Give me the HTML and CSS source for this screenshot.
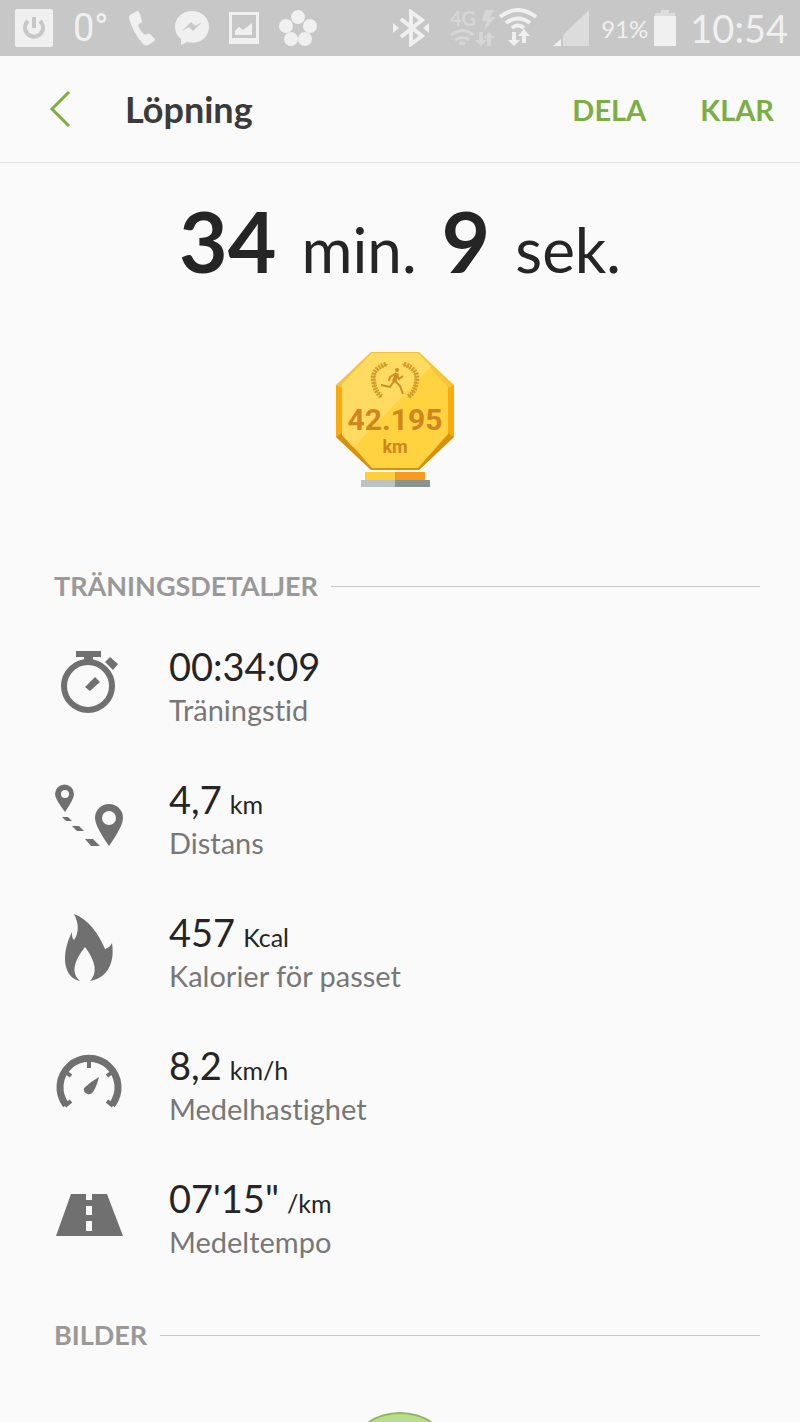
FILE: index.html
```
<!DOCTYPE html>
<html lang="sv">
<head>
    <meta charset="UTF-8">
    <meta name="viewport" content="width=device-width, initial-scale=1.0">
    <link rel="stylesheet" href="styles.css">
    <title>Löpning</title>
</head>
<body>
    <div class="statusbar">
        <div class="status-left">
            <svg width="38" height="38" viewBox="0 0 38 38">
                <rect width="38" height="38" rx="2" fill="#f0f0f0"/>
                <path d="M13 12a9 9 0 1 0 12 0M19 8v11" fill="none" stroke="#c7c7c7" stroke-width="4"/>
            </svg>
            <span class="temp">0°</span>
            <svg width="26" height="36" viewBox="0 0 26 36">
                <path d="M1 5 8 1q2 0 3 3l2 7q0 2-3 3l-1 1q2 6 7 10l2-1q2-1 4 1l4 4q0 2-2 3l-5 3q-3 1-5-1Q4 23 0 8q0-2 1-3z" fill="#f0f0f0"/>
            </svg>
            <svg width="34" height="36" viewBox="0 0 34 36">
                <path d="M17 1C7 1 0 8 0 17c0 5 2 9 6 12v6l6-3c13 3 22-5 22-15C34 8 27 1 17 1z" fill="#f0f0f0"/>
                <path d="M7 21l9-9 4 4 7-4-9 9-4-4z" fill="#c7c7c7"/>
            </svg>
            <svg width="30" height="34" viewBox="0 0 30 34">
                <path d="M0 1h30v32H0zM3 4v23h24V4z" fill="#f0f0f0" fill-rule="evenodd"/>
                <path d="M6 24v-4l4-4 4 3 9-7v12z" fill="#f0f0f0"/>
            </svg>
            <svg width="38" height="38" viewBox="0 0 38 38" fill="#f0f0f0">
                <circle cx="19" cy="8" r="7"/>
                <circle cx="7" cy="17" r="7"/>
                <circle cx="31" cy="17" r="7"/>
                <circle cx="12" cy="30" r="7"/>
                <circle cx="26" cy="30" r="7"/>
            </svg>
        </div>
        <div class="status-right">
            <svg class="bluetooth" width="36" height="38" viewBox="0 0 36 38">
                <path d="M8 10l21 17-11 8V3l11 8L8 28" fill="none" stroke="#f0f0f0" stroke-width="4"/>
                <path d="M0 14l6 5-6 5zM36 14l-6 5 6 5z" fill="#f0f0f0"/>
            </svg>
            <svg class="network" width="48" height="42" viewBox="0 -2 48 42">
                <text class="network-text" x="1" y="17">4G</text>
                <path d="M36 1h9l-4 7h6L35 21l3-9h-5zM30 23h4v8h4l-6 6-6-6h4zM42 37h-4v-8h-4l6-6 6 6h-4z" fill="#d6d6d6"/>
                <g fill="none" stroke="#d6d6d6" stroke-width="3">
                    <path d="M2 26q12-9 22 0M6 31q7-5 14 0M10 35q3-2 6 0"/>
                </g>
            </svg>
            <svg class="wifi" width="38" height="40" viewBox="0 0 38 40">
                <g fill="none" stroke="#f0f0f0" stroke-width="4">
                    <path d="M1 9q18-14 36 0M7 15q12-9 24 0M13 20q6-5 12 0"/>
                </g>
                <path d="M13 24h4v8h4l-6 6-6-6h4zM27 35h-4v-7h-4l6-7 6 7h-4z" fill="#f0f0f0"/>
            </svg>
            <svg class="signal" width="36" height="36" viewBox="0 0 36 36">
                <path d="M36 0v36H10V25z" fill="#dcdcdc"/>
                <path d="M0 36l8-7v7z" fill="#f0f0f0"/>
            </svg>
            <span class="percent">91%</span>
            <svg class="battery" width="22" height="36" viewBox="0 0 22 36">
                <path d="M7 0h8v3h6v4H1V3h6z" fill="#dcdcdc"/>
                <path d="M0 6h22v30H0z" fill="#f0f0f0"/>
            </svg>
            <span class="clock">10:54</span>
        </div>
    </div>

    <header class="topbar">
        <button class="back" aria-label="Tillbaka">
            <svg width="22" height="36" viewBox="0 0 22 36">
                <path d="M20 1L3 18l17 17" fill="none" stroke="#7cae44" stroke-width="3"/>
            </svg>
        </button>
        <h1 class="title">Löpning</h1>
        <button class="action">DELA</button>
        <button class="action">KLAR</button>
    </header>

    <main>
        <p class="duration"><b>34</b> <span>min.</span> <b>9</b> <span>sek.</span></p>

        <div class="medal">
            <svg width="120" height="136" viewBox="0 0 120 136">
                <defs>
                    <clipPath id="face"><path d="M37 1h46l30 31v51l-30 33H37L7 83V32z"/></clipPath>
                </defs>
                <path d="M36 0h48l35 33v52l-35 33H36L1 85V33z" fill="#f7c33b"/>
                <path d="M1 33l6 3v45l-6 4zM119 33l-6 3v45l6 4z" fill="#fca90b"/>
                <path d="M1 85l6-4 30 34h46l30-34 6 4-35 33H36z" fill="#d4920f"/>
                <path d="M37 1h46l30 34v47l-30 34H37L7 82V35z" fill="#ffd23f"/>
                <path d="M0 0h110L7 107z" fill="#ffdc61" clip-path="url(#face)"/>
                <!-- laurel -->
                <g fill="none" stroke="#d29b2e">
                    <path d="M53 12Q37 17 39 31q1 9 8 14M67 12q16 5 14 19-1 9-8 14" stroke-width="1"/>
                    <path d="M51 12Q35 18 39 31q1 9 8 14M69 12q16 6 12 19-1 9-8 14" stroke-width="5" stroke-dasharray="2 1"/>
                </g>
                <!-- runner -->
                <circle cx="62" cy="18" r="2" fill="#cf8e25"/>
                <path d="M62 21l-3 9" fill="none" stroke="#cf8e25" stroke-width="4"/>
                <path d="M60 22l-5 3-1 4M62 23l2 4 4-3M59 29l-4 6-9-2M60 29l5 5 3 8" fill="none" stroke="#cf8e25" stroke-width="2"/>
                <text class="medal-value" x="60" y="78">42.195</text>
                <text class="medal-unit" x="60" y="101">km</text>
                <path d="M30 120h30v8H30z" fill="#ffcf38"/>
                <path d="M60 120h30v8H60z" fill="#f89a1c"/>
                <path d="M26 128h34v7H26z" fill="#bcc3c3"/>
                <path d="M60 128h35v7H60z" fill="#8a9592"/>
            </svg>
        </div>

        <h2 class="section-title">TRÄNINGSDETALJER</h2>
        <ul class="details">
            <li>
                <svg width="70" height="70" viewBox="0 0 70 70">
                    <circle cx="34" cy="38" r="24" fill="none" stroke="#707070" stroke-width="6"/>
                    <path d="M22 3h25v6h-8v6h-9V9h-8zM56 9l8 7-5 6-8-8zM31 39l10-10 5 5-10 9z" fill="#707070"/>
                </svg>
                <div>
                    <p class="value">00:34:09</p>
                    <p class="label">Träningstid</p>
                </div>
            </li>
            <li>
                <svg width="70" height="70" viewBox="0 0 70 70">
                    <g fill="#707070" fill-rule="evenodd">
                        <path d="M11 31Q1 18 1 13a9 9 0 0 1 19 0q0 5-9 18zM11 9a4 4 0 1 0 0 8 4 4 0 1 0 0-8z"/>
                        <path d="M55 65Q41 45 41 37a14 14 0 0 1 28 0q0 8-14 28zM55 30a7 7 0 1 0 0 14 7 7 0 1 0 0-14z"/>
                        <path d="M8 36h6l4 4h-6zM18 45h7l5 5h-7zM31 58h8l7 7h-9z"/>
                    </g>
                </svg>
                <div>
                    <p class="value">4,7 <small>km</small></p>
                    <p class="label">Distans</p>
                </div>
            </li>
            <li>
                <svg width="70" height="70" viewBox="0 0 70 70">
                    <path d="M20 0c14 5 25 20 31 35 3-1 6-3 7-6 3 19-4 35-22 38 9-9 4-22-5-34-10 13-15 25-5 34C10 64 6 42 18 18c0 4 0 6 2 8 5-7 5-17 0-26z" fill="#707070"/>
                </svg>
                <div>
                    <p class="value">457 <small>Kcal</small></p>
                    <p class="label">Kalorier för passet</p>
                </div>
            </li>
            <li>
                <svg width="70" height="70" viewBox="0 0 70 70">
                    <path d="M12 58a29 29 0 1 1 46 0" fill="none" stroke="#707070" stroke-width="7"/>
                    <path d="M35 13v8M17 29l-4-3M53 29l4-3M17 54l-6 5M53 54l6 5" fill="none" stroke="#707070" stroke-width="4"/>
                    <path d="M45 30q-2 9-6 15a5 5 0 0 1-9-4q6-6 15-11z" fill="#707070"/>
                </svg>
                <div>
                    <p class="value">8,2 <small>km/h</small></p>
                    <p class="label">Medelhastighet</p>
                </div>
            </li>
            <li>
                <svg width="70" height="70" viewBox="0 0 70 70">
                    <path d="M17 14h15v6h6v-6h15l16 42H2zM32 26v9h6v-9zM32 41v10h6V41z" fill="#707070" fill-rule="evenodd"/>
                </svg>
                <div>
                    <p class="value">07'15" <small>/km</small></p>
                    <p class="label">Medeltempo</p>
                </div>
            </li>
        </ul>

        <h2 class="section-title">BILDER</h2>
        <button class="add-photo" aria-label="Lägg till bild"></button>
    </main>
</body>
</html>
```

FILE: styles.css
```
*{
    margin: 0;
    padding: 0;
    box-sizing: border-box;
}
body{
    height: 100vh;
    overflow: hidden;
    background-color: #fafafa;
    color: #252525;
    font-family: Lato, "Open Sans", sans-serif;
    font-variant-ligatures: none;
}
svg{
    display: block;
    flex-shrink: 0;
}
button{
    border: none;
    background: none;
    font-family: inherit;
    cursor: pointer;
}

/* status bar */
.statusbar{
    display: flex;
    justify-content: space-between;
    align-items: center;
    height: 56px;
    padding: 0 12px 0 15px;
    background-color: #c7c7c7;
    color: #f0f0f0;
}
.status-left{
    display: flex;
    align-items: center;
    gap: 20px;
}
.status-right{
    display: flex;
    align-items: center;
}
.temp{
    width: 36px;
    font-family: Roboto, sans-serif;
    font-size: 38px;
    font-weight: 400;
}
.network{
    margin-left: 20px;
}
.network-text{
    font-size: 20px;
    font-weight: 700;
    fill: #d6d6d6;
}
.wifi{
    margin: 0 16px 0 2px;
}
.percent{
    margin-left: 12px;
    font-size: 24px;
}
.battery{
    margin: 0 14px 0 6px;
}
.clock{
    font-size: 38px;
}

/* header */
.topbar{
    display: flex;
    align-items: center;
    height: 107px;
    padding: 0 26px 0 49px;
    border-bottom: 1px solid #e2e2e2;
}
.back{
    margin-right: 54px;
}
.title{
    flex: 1;
    color: #3b3b3b;
    font-size: 36px;
    font-weight: 700;
}
.action{
    margin-left: 54px;
    color: #7cae44;
    font-size: 29px;
    font-weight: 700;
}

/* result */
.duration{
    display: flex;
    justify-content: center;
    align-items: baseline;
    gap: 25px;
    padding-top: 26px;
    font-size: 62px;
    line-height: 104px;
}
.duration b{
    font-size: 84px;
    font-weight: 700;
}
.medal{
    display: flex;
    justify-content: center;
    margin: 51px 10px 76px 0;
}
.medal-value,
.medal-unit{
    font-family: Roboto, sans-serif;
    font-weight: 700;
    text-anchor: middle;
    fill: #cf861f;
}
.medal-value{
    font-size: 30px;
}
.medal-unit{
    font-size: 18px;
}

/* sections */
.section-title{
    display: flex;
    align-items: center;
    gap: 13px;
    padding: 0 40px 0 54px;
    color: #999;
    font-size: 27px;
    font-weight: 700;
    line-height: 44px;
}
.section-title::after{
    content: "";
    flex: 1;
    height: 1px;
    background-color: #c8c8c8;
}
.details{
    display: grid;
    gap: 45px;
    padding: 36px 40px 49px 54px;
    list-style: none;
}
.details li{
    display: flex;
    align-items: flex-start;
    gap: 45px;
}
.details svg{
    margin-top: 4px;
}
.value{
    display: flex;
    align-items: baseline;
    gap: 8px;
    height: 44px;
    font-size: 38px;
    line-height: 44px;
}
.value small{
    font-size: 25px;
}
.label{
    color: #777;
    font-size: 29px;
    line-height: 44px;
}
.add-photo{
    display: block;
    width: 116px;
    height: 116px;
    margin: 55px auto 0;
    border: 2px solid #8fb860;
    border-radius: 50%;
    background-color: #b9dc8d;
}
```
